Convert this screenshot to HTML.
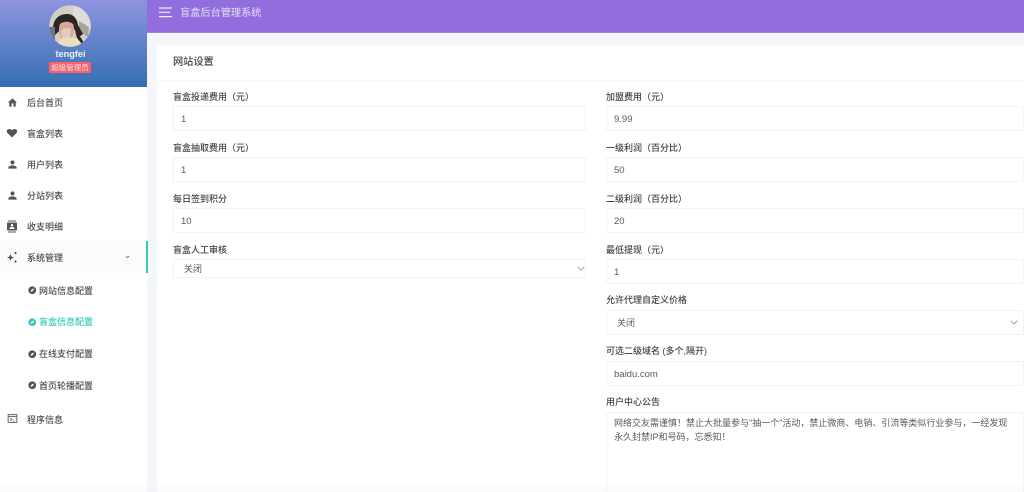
<!DOCTYPE html>
<html lang="zh-CN">
<head>
<meta charset="utf-8">
<title>盲盒后台管理系统</title>
<style>
*{box-sizing:border-box;margin:0;padding:0}
html,body{width:1024px;height:492px;overflow:hidden;background:#f5f6fa}
body{font-family:"Liberation Sans","Noto Sans CJK SC",sans-serif;color:#4d5259;position:relative}
#root{position:absolute;left:0;top:0;width:1024px;height:492px;overflow:hidden;filter:blur(.35px)}
.a{position:absolute;white-space:nowrap}
#side{left:0;top:0;width:147px;height:492px;background:#fff}
#head{left:0;top:0;width:147px;height:87px;background:linear-gradient(180deg,#8c95de 0%,#356eb2 100%)}
#top{left:147px;top:0;width:877px;height:33px;background:#926ddd;border-bottom:1px solid #a385e4}
#card{left:157px;top:45px;width:867px;height:447px;background:#fff}
.m{left:27px;font-size:9px;line-height:12px;color:#484c52;font-weight:500}
.s{left:39px;font-size:9px;line-height:12px;color:#484c52;font-weight:500}
.l{font-size:9px;line-height:12px;color:#3f4349;font-weight:500}
.i{background:#fff;border:1px solid #f3f3f5;border-radius:2px;font-size:9.5px;color:#555960;padding-left:7px;padding-top:1px;display:flex;align-items:center}
.sel{padding-left:10px;padding-top:0}
.ic{position:absolute;fill:#50545b}
.chev{position:absolute;fill:none;stroke:#8a8d92;stroke-width:.8}
</style>
</head>
<body>
<div id="root">
<div class="a" id="side"></div>
<div class="a" style="left:0;top:241px;width:147px;height:32px;background:#fbfbfc"></div>
<div class="a" id="head"></div>

<svg class="a" style="left:49px;top:5px" width="42" height="42" viewBox="0 0 42 42">
<defs><clipPath id="c"><circle cx="21" cy="21" r="20.8"/></clipPath></defs>
<g clip-path="url(#c)">
<rect width="42" height="42" fill="#d3cdc8"/>
<rect x="24" y="0" width="18" height="24" fill="#dcdcdb"/>
<path d="M30 16l10 6-1 10-9-6z" fill="#a8a49c"/>
<path d="M4 22C5 13 11 9 18 9c6 0 10 4 11 11l5 9-4 3-6-10-12 2-6 6z" fill="#2d2523"/>
<path d="M11 19c3-3 10-3 13 0 2 4 1 11-2 15l-9 1c-3-5-4-11-2-16z" fill="#d3a899"/>
<path d="M12 26c2-3 8-4 10-2l-1 9-8 2z" fill="#e8c9bc"/>
<path d="M8 42l3-8 6-1 7-1 6 2 4 8z" fill="#e9dfbf"/>
<path d="M26 26l6 7 3 5-2 1-5-6z" fill="#2d2523"/>
<rect x="0" y="22" width="6" height="20" fill="#6a7482"/>
</g>
</svg>

<div class="a" style="left:0;top:48px;width:141px;text-align:center;font-size:9.2px;line-height:12px;color:#eef2fa;font-weight:700">tengfei</div>
<div class="a" style="left:49px;top:62px;width:42px;height:11px;background:#f5636f;border-radius:1px;color:#fbdfe2;font-size:7.5px;line-height:11px;text-align:center">超级管理员</div>

<svg class="ic" style="left:7px;top:97px" width="11" height="11" viewBox="0 0 24 24"><path d="M10 21v-7h4v7h5v-9h3L12 3 2 12h3v9z"/></svg>
<div class="a m" style="top:97px">后台首页</div>
<svg class="ic" style="left:6px;top:127px" width="12" height="12" viewBox="0 0 24 24"><path d="M12 21 3 12C0 8.500 2 4 6.500 4c2.500 0 4.300 1 5.500 2.500C13.200 5 15 4 17.500 4 22 4 24 8.500 21 12z"/></svg>
<div class="a m" style="top:128px">盲盒列表</div>
<svg class="ic" style="left:7px;top:159px" width="11" height="11" viewBox="0 0 24 24"><path d="M12 12a4.500 4.500 0 1 0 0-9 4.500 4.500 0 0 0 0 9zm0 2c-3.500 0-9 1.800-9 4.500V21h18v-2.500c0-2.700-5.500-4.500-9-4.500z"/></svg>
<div class="a m" style="top:159px">用户列表</div>
<svg class="ic" style="left:7px;top:190px" width="11" height="11" viewBox="0 0 24 24"><path d="M12 12a4.500 4.500 0 1 0 0-9 4.500 4.500 0 0 0 0 9zm0 2c-3.500 0-9 1.800-9 4.500V21h18v-2.500c0-2.700-5.500-4.500-9-4.500z"/></svg>
<div class="a m" style="top:190px">分站列表</div>
<svg class="ic" style="left:6px;top:220px" width="12" height="13" viewBox="0 0 24 24"><path fill-rule="evenodd" d="M4 0h16v2H4zM4 22h16v2H4zM3 4h18a1 1 0 0 1 1 1v14a1 1 0 0 1-1 1H3a1 1 0 0 1-1-1V5a1 1 0 0 1 1-1zm9 3a2.500 2.500 0 1 0 0 5 2.500 2.500 0 0 0 0-5zm-5 10h10v-1.500c0-1.700-3.300-2.500-5-2.500s-5 .8-5 2.500z"/></svg>
<div class="a m" style="top:221px">收支明细</div>
<svg class="ic" style="left:6px;top:251px" width="12" height="12" viewBox="0 0 24 24"><path d="M9 6l2 5 5 2-5 2-2 5-2-5-5-2 5-2z"/><circle cx="19" cy="4" r="2.200"/><circle cx="19" cy="21" r="2.200"/></svg>
<div class="a m" style="top:252px">系统管理</div>
<svg class="chev" style="left:125px;top:255px" width="5" height="4" viewBox="0 0 5 4"><path d="M.8 1l1.700 1.700L4.200 1" stroke="#666"/></svg>
<div class="a" style="left:146px;top:241px;width:2px;height:32px;background:#33cabb"></div>

<svg class="ic" style="left:28px;top:286px" width="8.500" height="8.500" viewBox="0 0 24 24"><path fill-rule="evenodd" d="M12 1a11 11 0 1 0 0 22 11 11 0 0 0 0-22zM7 17l3-7 7-3-3 7z"/></svg>
<div class="a s" style="top:285px">网站信息配置</div>
<svg class="ic" style="left:28px;top:318px;fill:#33cabb" width="8.500" height="8.500" viewBox="0 0 24 24"><path fill-rule="evenodd" d="M12 1a11 11 0 1 0 0 22 11 11 0 0 0 0-22zM7 17l3-7 7-3-3 7z"/></svg>
<div class="a s" style="top:316px;color:#33cabb">盲盒信息配置</div>
<svg class="ic" style="left:28px;top:350px" width="8.500" height="8.500" viewBox="0 0 24 24"><path fill-rule="evenodd" d="M12 1a11 11 0 1 0 0 22 11 11 0 0 0 0-22zM7 17l3-7 7-3-3 7z"/></svg>
<div class="a s" style="top:348px">在线支付配置</div>
<svg class="ic" style="left:28px;top:381px" width="8.500" height="8.500" viewBox="0 0 24 24"><path fill-rule="evenodd" d="M12 1a11 11 0 1 0 0 22 11 11 0 0 0 0-22zM7 17l3-7 7-3-3 7z"/></svg>
<div class="a s" style="top:380px">首页轮播配置</div>
<svg class="a" style="left:7px;top:413px" width="11" height="11" viewBox="0 0 24 24"><path d="M2.500 3.500h19v17h-19zM2.500 7.500h19M7 11l3.500 3L7 17M12 17.500h4" fill="none" stroke="#5b5f66" stroke-width="2"/></svg>
<div class="a m" style="top:414px">程序信息</div>

<div class="a" id="top"></div>
<svg class="a" style="left:159px;top:7px" width="13" height="11" viewBox="0 0 13 11"><path d="M0 1h13M0 5.300h11M0 9.600h13" stroke="#f0ecfb" stroke-width="1.200" fill="none"/></svg>
<div class="a" style="left:180px;top:6.500px;font-size:10.200px;line-height:13px;color:#e6dff8">盲盒后台管理系统</div>

<div class="a" id="card"></div>
<div class="a" style="left:157px;top:80px;width:867px;height:1px;background:#f8f8f9"></div>
<div class="a" style="left:173px;top:55.500px;font-size:10.200px;line-height:14px;color:#3f4349;font-weight:500">网站设置</div>

<div class="a l" style="left:173px;top:91px">盲盒投递费用（元）</div>
<div class="a i" style="left:173px;top:106px;width:413px;height:25px">1</div>
<div class="a l" style="left:173px;top:142px">盲盒抽取费用（元）</div>
<div class="a i" style="left:173px;top:157px;width:413px;height:25px">1</div>
<div class="a l" style="left:173px;top:193px">每日签到积分</div>
<div class="a i" style="left:173px;top:208px;width:413px;height:25px">10</div>
<div class="a l" style="left:173px;top:244px">盲盒人工审核</div>
<div class="a i sel" style="left:173px;top:259px;width:413px;height:19px;font-size:9px">关闭</div>
<svg class="chev" style="left:577px;top:266px" width="8" height="5" viewBox="0 0 8 5"><path d="M.6.8 4 4 7.400.8"/></svg>

<div class="a l" style="left:606px;top:91px">加盟费用（元）</div>
<div class="a i" style="left:606px;top:106px;width:418px;height:25px">9.99</div>
<div class="a l" style="left:606px;top:142px">一级利润（百分比）</div>
<div class="a i" style="left:606px;top:157px;width:418px;height:25px">50</div>
<div class="a l" style="left:606px;top:193px">二级利润（百分比）</div>
<div class="a i" style="left:606px;top:208px;width:418px;height:25px">20</div>
<div class="a l" style="left:606px;top:244px">最低提现（元）</div>
<div class="a i" style="left:606px;top:259px;width:418px;height:25px">1</div>
<div class="a l" style="left:606px;top:294px">允许代理自定义价格</div>
<div class="a i sel" style="left:606px;top:310px;width:418px;height:25px;font-size:9px">关闭</div>
<svg class="chev" style="left:1010px;top:320px" width="8" height="5" viewBox="0 0 8 5"><path d="M.6.8 4 4 7.400.8"/></svg>
<div class="a l" style="left:606px;top:345px">可选二级域名 (多个,隔开)</div>
<div class="a i" style="left:606px;top:361px;width:418px;height:25px">baidu.com</div>
<div class="a l" style="left:606px;top:396px">用户中心公告</div>
<div class="a" style="left:606px;top:412px;width:418px;height:90px;background:#fff;border:1px solid #f3f3f5;border-radius:2px"></div>
<div class="a" style="left:614px;top:416px;font-size:9px;line-height:14px;color:#555960">网络交友需谨慎！禁止大批量参与"抽一个"活动，禁止微商、电销、引流等类似行业参与，一经发现<br>永久封禁IP和号码，忘悉知！</div>

<div class="a" style="left:0;top:484px;width:1024px;height:8px;background:linear-gradient(180deg,rgba(240,240,242,0),rgba(240,240,242,.4))"></div>
</div>
</body>
</html>
